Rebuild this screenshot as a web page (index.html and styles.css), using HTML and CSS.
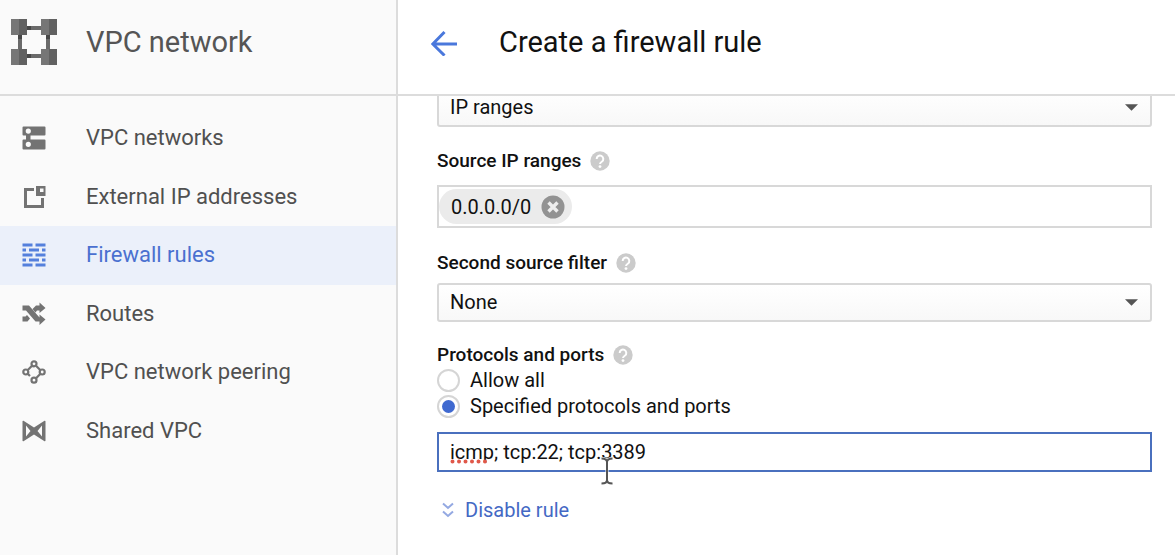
FILE: index.html
```html
<!DOCTYPE html>
<html lang="en">
<head>
<meta charset="utf-8">
<title>Create a firewall rule</title>
<link rel="stylesheet" href="styles.css">
</head>
<body>
<div class="app">
  <aside class="sidebar">
    <header class="bar product">
      <svg class="product-icon" viewBox="0 0 46 46" aria-hidden="true">
        <path fill="#6a6a6a" d="M16 7h14v4H16zM16 35h14v4H16zM7 16h4v14H7zM35 16h4v14h-4z"/>
        <path fill="#474747" d="M16 7h4v4h-4zM16 35h4v4h-4zM7 16h4v4H7zM35 16h4v4h-4z"/>
        <path fill="#767676" d="M0 0h16v16H0zM30 0h16v16H30zM0 30h16v16H0zM30 30h16v16H30z"/>
        <path fill="#616161" d="M8 0h8v16H8zM38 0h8v16h-8zM8 30h8v16H8zM38 30h8v16h-8z"/>
      </svg>
      <span class="title product-title">VPC network</span>
    </header>
    <nav class="nav">
      <a class="nav-item" href="#networks">
        <svg class="nav-icon" viewBox="0 0 24 24" aria-hidden="true"><path fill="currentColor" fill-rule="evenodd" d="M1.500 0.500h21a1 1 0 0 1 1 1v7a1 1 0 0 1-1 1H8.500v4h14a1 1 0 0 1 1 1v8a1 1 0 0 1-1 1h-21a1 1 0 0 1-1-1v-8a1 1 0 0 1 1-1h2.500v-4H1.500a1 1 0 0 1-1-1v-7a1 1 0 0 1 1-1zM6.300 2.500a2.600 2.600 0 1 0 0 5.200a2.600 2.600 0 1 0 0-5.200zM6.300 15.700a2.600 2.600 0 1 0 0 5.200a2.600 2.600 0 1 0 0-5.200z"/></svg>
        <span>VPC networks</span>
      </a>
      <a class="nav-item" href="#addresses">
        <svg class="nav-icon" viewBox="0 0 24 24" aria-hidden="true"><path fill="currentColor" fill-rule="evenodd" d="M2 3h10v3H5v14h14v-7h3v10H2zM14 1h9.500v10H14zM18 3.500v3.500h3.500V3.500z"/></svg>
        <span>External IP addresses</span>
      </a>
      <a class="nav-item nav-item-active" href="#firewall" aria-current="page">
        <svg class="nav-icon" viewBox="0 0 24 24" aria-hidden="true"><path fill="currentColor" d="M.5.500h10v3h-10zM13.500.500h10v3h-10zM.5 5.500h3.500v3H.5zM7 5.500h10v3H7zM20 5.500h3.500v3H20zM.5 10.500h10v3h-10zM13.500 10.500h10v3h-10zM.5 15.500h3.500v3H.5zM7 15.500h10v3H7zM20 15.500h3.500v3H20zM.5 20.500h10v3h-10zM13.500 20.500h10v3h-10z"/></svg>
        <span>Firewall rules</span>
      </a>
      <a class="nav-item" href="#routes">
        <svg class="nav-icon" viewBox="0 0 24 24" aria-hidden="true"><path fill="currentColor" d="M.5 3.500h6.500L17.500 15.500V12.500L23.500 17.500L17.500 23V19.500H13.500L4 8.500H.5zM10.500 7L14 3.500h3.500V.5L23.500 6L17.500 11V8.500H15L13.500 10.500zM.5 14.500h3L5 13L8 16.500L5.500 19.500H.5z"/></svg>
        <span>Routes</span>
      </a>
      <a class="nav-item" href="#peering">
        <svg class="nav-icon" viewBox="0 0 24 24" aria-hidden="true"><g fill="none" stroke="currentColor" stroke-width="2.200"><circle cx="12" cy="3.800" r="2.500"/><circle cx="3.800" cy="12" r="2.500"/><circle cx="20.200" cy="12" r="2.500"/><circle cx="12" cy="20.200" r="2.500"/><path d="M10 5.800L5.800 10M14 5.800L18.200 10M18.200 14L14 18.200M5.500 13.500l2.500 2.500"/></g></svg>
        <span>VPC network peering</span>
      </a>
      <a class="nav-item" href="#shared">
        <svg class="nav-icon" viewBox="0 0 24 24" aria-hidden="true"><path fill="currentColor" fill-rule="evenodd" d="M.5 2.500Q.5 1.500 1.500 1.800L12 8.500L22.500 1.800Q23.500 1.500 23.500 2.500V21.500Q23.500 22.500 22.500 22.200L12 15.500L1.500 22.200Q.5 22.500.5 21.500zM4 6.500v11L8.500 12zM20 6.500v11L15.500 12z"/></svg>
        <span>Shared VPC</span>
      </a>
    </nav>
  </aside>

  <main class="main">
    <header class="bar page-header">
      <a class="back" href="#back" aria-label="Back">
        <svg class="back-icon" viewBox="0 0 26 28" aria-hidden="true"><path d="M26 16H2M13.500 4L1.800 16L13.500 27.500" fill="none" stroke="currentColor" stroke-width="3"/></svg>
      </a>
      <h1 class="title">Create a firewall rule</h1>
    </header>

    <form class="form">
      <div class="select-wrap select-first">
        <select class="box select" aria-label="Source filter"><option>IP ranges</option></select>
        <svg class="caret" viewBox="0 0 12 6" aria-hidden="true"><path fill="#555" d="M0 0h12L6 6z"/></svg>
      </div>

      <div class="label-row label-source">
        <label for="ranges">Source IP ranges</label>
        <svg class="help" viewBox="0 0 20 20" aria-hidden="true"><circle cx="10" cy="10" r="9.700" fill="#cbcbcb"/><path d="M6.700 8a3.300 3.300 0 1 1 5.300 2.500Q10 11.800 10 13" fill="none" stroke="#fff" stroke-width="2"/><circle cx="10" cy="15.600" r="1.400" fill="#fff"/></svg>
      </div>
      <div class="box chips">
        <span class="chip">0.0.0.0/0
          <button class="chip-remove" type="button" aria-label="Remove 0.0.0.0/0"><svg class="chip-icon" viewBox="0 0 24 24" aria-hidden="true"><circle cx="12" cy="12" r="11.500" fill="#929292"/><path d="M7.500 7.500l9 9M16.500 7.500l-9 9" stroke="#ededed" stroke-width="3.400"/></svg></button>
        </span>
        <input class="chip-input" id="ranges" type="text">
      </div>

      <div class="label-row label-second">
        <label for="second">Second source filter</label>
        <svg class="help" viewBox="0 0 20 20" aria-hidden="true"><circle cx="10" cy="10" r="9.700" fill="#cbcbcb"/><path d="M6.700 8a3.300 3.300 0 1 1 5.300 2.500Q10 11.800 10 13" fill="none" stroke="#fff" stroke-width="2"/><circle cx="10" cy="15.600" r="1.400" fill="#fff"/></svg>
      </div>
      <div class="select-wrap">
        <select class="box select" id="second"><option>None</option></select>
        <svg class="caret" viewBox="0 0 12 6" aria-hidden="true"><path fill="#555" d="M0 0h12L6 6z"/></svg>
      </div>

      <div class="label-row label-ports">
        <label for="ports">Protocols and ports</label>
        <svg class="help" viewBox="0 0 20 20" aria-hidden="true"><circle cx="10" cy="10" r="9.700" fill="#cbcbcb"/><path d="M6.700 8a3.300 3.300 0 1 1 5.300 2.500Q10 11.800 10 13" fill="none" stroke="#fff" stroke-width="2"/><circle cx="10" cy="15.600" r="1.400" fill="#fff"/></svg>
      </div>
      <label class="choice"><input class="radio" type="radio" name="mode">Allow all</label>
      <label class="choice"><input class="radio" type="radio" name="mode" checked>Specified protocols and ports</label>
      <div class="ports-wrap">
        <input class="box ports" id="ports" type="text" value="icmp; tcp:22; tcp:3389" spellcheck="false">
        <svg class="squiggle" viewBox="0 0 38 5" aria-hidden="true"><path d="M2.500 2.500h34" stroke="#e0584a" stroke-width="4" stroke-linecap="round" stroke-dasharray="0 6.500"/></svg>
        <svg class="pointer" viewBox="0 0 14 28" aria-hidden="true"><path d="M1.500 1.500Q7 1.500 7 5Q7 1.500 12.500 1.500M7 4V24M1.500 26.500Q7 26.500 7 23Q7 26.500 12.500 26.500" fill="none" stroke="#fff" stroke-width="3"/><path d="M1.500 1.500Q7 1.500 7 5Q7 1.500 12.500 1.500M7 4V24M1.500 26.500Q7 26.500 7 23Q7 26.500 12.500 26.500" fill="none" stroke="#555" stroke-width="2"/></svg>
      </div>
      <a class="disable" href="#disable">
        <svg class="chevrons" viewBox="0 0 12 16" aria-hidden="true"><path d="M1 1.500l5 4.500l5-4.500M1 9.500l5 4.500l5-4.500" fill="none" stroke="#94a9e2" stroke-width="2"/></svg>
        <span>Disable rule</span>
      </a>
    </form>
  </main>
</div>
</body>
</html>
```
FILE: styles.css
```css
* {
  box-sizing: border-box;
}

body {
  margin: 0;
  background: #fff;
  color: #111;
  font: 20px/24px Roboto, "Liberation Sans", sans-serif;
}

a {
  color: inherit;
  text-decoration: none;
}

.app {
  display: grid;
  grid-template-columns: 398px 1fr;
  height: 100vh;
}

.sidebar {
  background: #fafafa;
  border-right: 2px solid #dcdcdc;
}

.bar {
  display: flex;
  align-items: center;
  min-height: 96px;
  padding-bottom: 10px;
  border-bottom: 2px solid #dcdcdc;
}

.title {
  margin: 0;
  font-size: 29px;
  font-weight: 400;
  line-height: 36px;
}

.product {
  gap: 29px;
  padding-left: 11px;
}

.product-icon {
  width: 46px;
  height: 46px;
}

.product-title {
  color: #555;
}

.nav {
  display: grid;
  grid-auto-rows: 1fr;
  min-height: 351px;
  margin-top: 13px;
  color: #505050;
  font-size: 22px;
}

.nav-item {
  display: flex;
  align-items: center;
  gap: 40px;
  padding: 0 22px;
}

.nav-item-active {
  background: #ebf0fa;
  color: #4a70d0;
}

.nav-icon {
  width: 24px;
  height: 24px;
  color: #737373;
}

.nav-item-active .nav-icon {
  color: #5580dc;
}

.main {
  display: flex;
  flex-direction: column;
  min-width: 0;
  min-height: 0;
}

.page-header {
  flex-shrink: 0;
  gap: 42px;
  padding-left: 33px;
}

.back {
  display: flex;
  color: #4a78dc;
}

.back-icon {
  width: 26px;
  height: 28px;
}

.form {
  flex: 1;
  overflow: hidden;
  padding: 0 23px 0 39px;
}

.box {
  width: 100%;
  border: 2px solid #d8d8d8;
  background: #fff;
  color: #111;
  font: inherit;
}

.select-wrap {
  position: relative;
  display: flex;
}

.select-first {
  margin-top: -8px;
}

.select {
  height: 39px;
  padding: 0 11px 1px;
  border-radius: 3px;
  background: linear-gradient(#fff, #f8f8f8);
  appearance: none;
}

.caret {
  position: absolute;
  top: 16px;
  right: 14px;
  width: 13px;
  height: 7px;
}

.label-row {
  display: flex;
  align-items: center;
  gap: 9px;
  font-size: 19px;
  font-weight: 500;
}

.help {
  width: 20px;
  height: 20px;
}

.label-source {
  margin: 22px 0 12px;
}

.label-second {
  margin: 23px 0 8px;
}

.label-ports {
  margin-top: 21px;
}

.chips {
  display: flex;
  align-items: center;
  height: 43px;
}

.chip {
  display: flex;
  align-items: center;
  gap: 10px;
  height: 35px;
  padding: 0 7px 0 12px;
  border-radius: 18px;
  background: #ebebeb;
}

.chip-remove {
  display: flex;
  padding: 0;
  border: 0;
  background: none;
}

.chip-icon {
  width: 24px;
  height: 24px;
}

.chip-input {
  flex: 1;
  min-width: 0;
  border: 0;
  outline: 0;
  font: inherit;
}

.choice {
  display: flex;
  align-items: center;
  gap: 10px;
  height: 26px;
}

.radio {
  display: grid;
  place-items: center;
  width: 23px;
  height: 23px;
  margin: 0;
  border: 2px solid #d5d5d5;
  border-radius: 50%;
  background: #fff;
  appearance: none;
}

.radio:checked::before {
  width: 13px;
  height: 13px;
  border-radius: 50%;
  background: #3f69d0;
  content: "";
}

.ports-wrap {
  position: relative;
  display: flex;
  margin: 13px 0 26px;
}

.ports {
  height: 40px;
  padding: 0 11px;
  border-color: #4a70be;
  outline: 0;
}

.squiggle {
  position: absolute;
  top: 27px;
  left: 13px;
  width: 38px;
  height: 5px;
}

.pointer {
  position: absolute;
  top: 25px;
  left: 163px;
  width: 14px;
  height: 28px;
}

.disable {
  display: inline-flex;
  align-items: center;
  gap: 11px;
  padding-left: 5px;
  color: #4468c4;
}

.chevrons {
  width: 12px;
  height: 16px;
}
```
